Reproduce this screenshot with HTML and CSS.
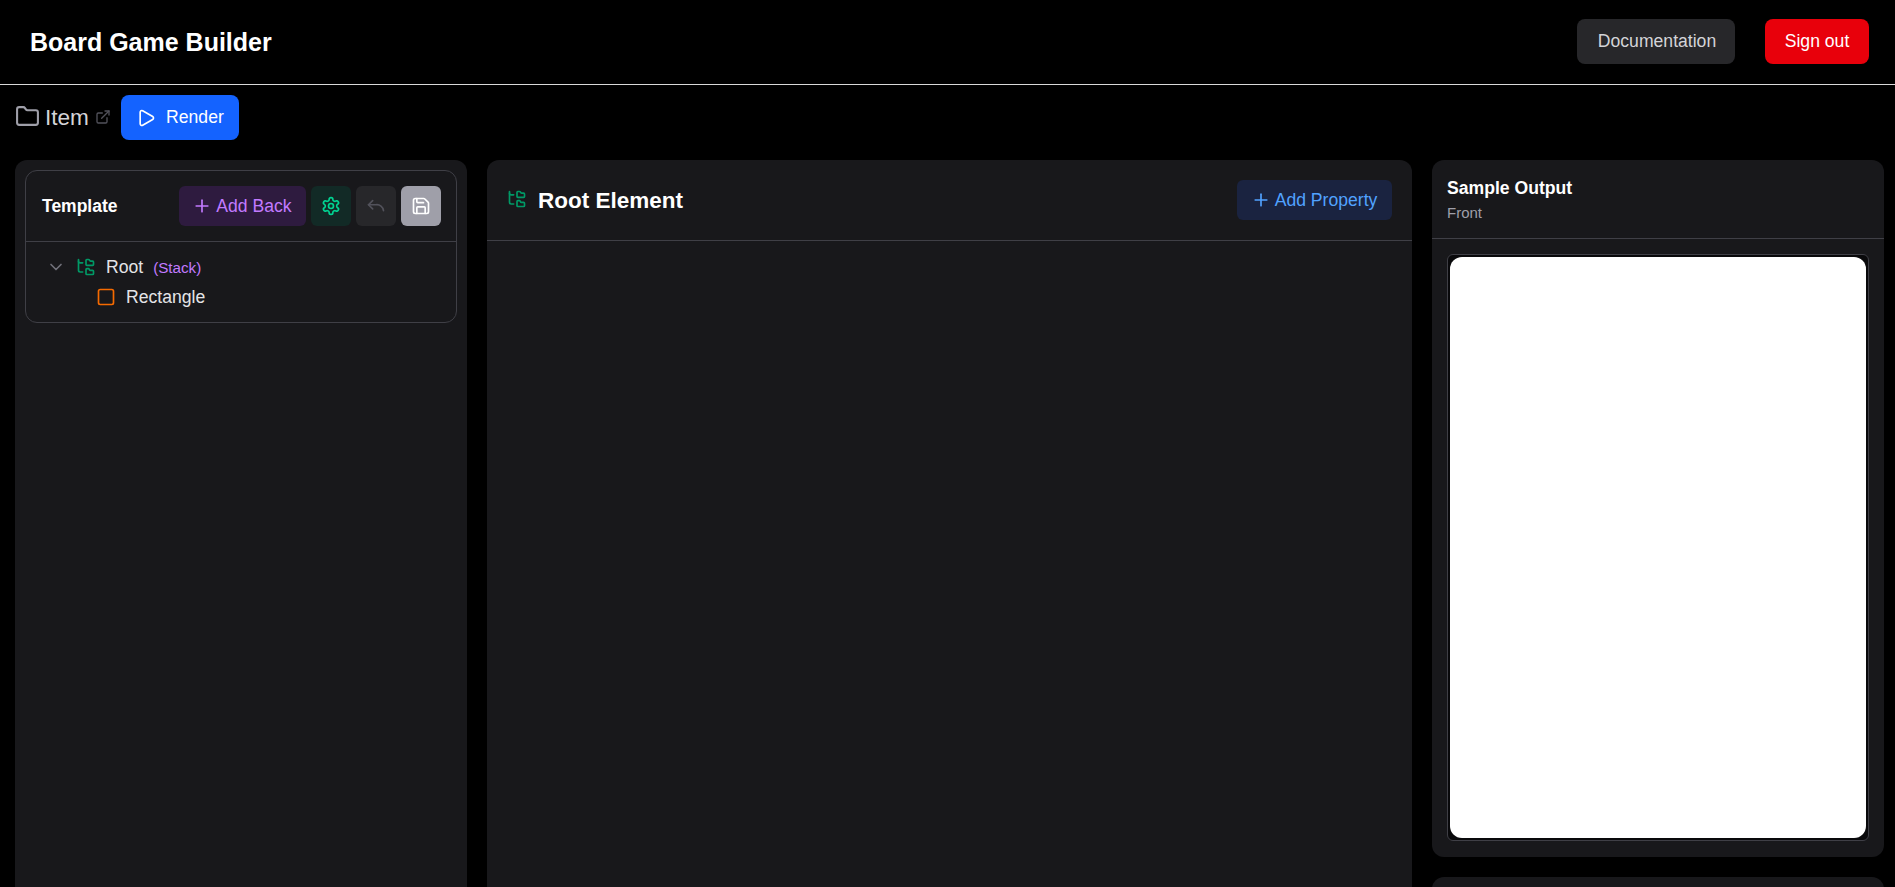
FILE: index.html
```html
<!DOCTYPE html>
<html lang="en">
<head>
<meta charset="utf-8">
<title>Board Game Builder</title>
<link rel="stylesheet" href="styles.css">
</head>
<body>
<svg class="defs" width="0" height="0" aria-hidden="true">
  <symbol id="tree" viewBox="0 0 24 24"><path d="M20 10a1 1 0 0 0 1-1V6a1 1 0 0 0-1-1h-2.5a1 1 0 0 1-.8-.4l-.9-1.2A1 1 0 0 0 15 3h-2a1 1 0 0 0-1 1v5a1 1 0 0 0 1 1Z"/><path d="M20 21a1 1 0 0 0 1-1v-3a1 1 0 0 0-1-1h-2.9a1 1 0 0 1-.88-.55l-.42-.85a1 1 0 0 0-.92-.6H13a1 1 0 0 0-1 1v5a1 1 0 0 0 1 1Z"/><path d="M3 5a2 2 0 0 0 2 2h3"/><path d="M3 3v13a2 2 0 0 0 2 2h3"/></symbol>
  <symbol id="plus" viewBox="0 0 24 24"><path d="M5 12h14"/><path d="M12 5v14"/></symbol>
</svg>
<header class="topbar">
  <h1 class="brand">Board Game Builder</h1>
  <nav class="top-actions">
    <button class="btn btn-doc">Documentation</button>
    <button class="btn btn-signout">Sign out</button>
  </nav>
</header>
<div class="toolbar">
  <svg class="ic ic-folder" viewBox="0 0 24 24"><path d="M20 20a2 2 0 0 0 2-2V8a2 2 0 0 0-2-2h-7.9a2 2 0 0 1-1.69-.9L9.6 3.9A2 2 0 0 0 7.93 3H4a2 2 0 0 0-2 2v13a2 2 0 0 0 2 2Z"/></svg>
  <span class="item-name">Item</span>
  <svg class="ic ic-ext" viewBox="0 0 24 24"><path d="M15 3h6v6"/><path d="M10 14 21 3"/><path d="M18 13v6a2 2 0 0 1-2 2H5a2 2 0 0 1-2-2V8a2 2 0 0 1 2-2h6"/></svg>
  <button class="btn btn-render"><svg class="ic ic-play" viewBox="0 0 24 24"><path d="M5 5a2 2 0 0 1 3.008-1.728l11.997 6.998a2 2 0 0 1 .003 3.458l-12 7A2 2 0 0 1 5 19z"/></svg>Render</button>
</div>
<main class="workspace">
  <section class="panel panel-left">
    <div class="tree-card">
      <div class="tree-head">
        <span class="tree-title">Template</span>
        <div class="tree-actions">
          <button class="btn btn-tint btn-violet"><svg class="ic ic-plus"><use href="#plus"/></svg>Add Back</button>
          <button class="btn-square sq-green"><svg class="ic ic-sq" viewBox="0 0 24 24"><path d="M12.22 2h-.44a2 2 0 0 0-2 2v.18a2 2 0 0 1-1 1.73l-.43.25a2 2 0 0 1-2 0l-.15-.08a2 2 0 0 0-2.73.73l-.22.38a2 2 0 0 0 .73 2.73l.15.1a2 2 0 0 1 1 1.72v.51a2 2 0 0 1-1 1.74l-.15.09a2 2 0 0 0-.73 2.73l.22.38a2 2 0 0 0 2.73.73l.15-.08a2 2 0 0 1 2 0l.43.25a2 2 0 0 1 1 1.73V20a2 2 0 0 0 2 2h.44a2 2 0 0 0 2-2v-.18a2 2 0 0 1 1-1.73l.43-.25a2 2 0 0 1 2 0l.15.08a2 2 0 0 0 2.73-.73l.22-.39a2 2 0 0 0-.73-2.73l-.15-.08a2 2 0 0 1-1-1.74v-.5a2 2 0 0 1 1-1.74l.15-.09a2 2 0 0 0 .73-2.73l-.22-.38a2 2 0 0 0-2.73-.73l-.15.08a2 2 0 0 1-2 0l-.43-.25a2 2 0 0 1-1-1.73V4a2 2 0 0 0-2-2z"/><circle cx="12" cy="12" r="3"/></svg></button>
          <button class="btn-square sq-gray"><svg class="ic ic-sq" viewBox="0 0 24 24"><path d="M8 5.5 3 10.5l5 5"/><path d="M3 10.5h9a8 8 0 0 1 9 7"/></svg></button>
          <button class="btn-square sq-save"><svg class="ic ic-sq" viewBox="0 0 24 24"><path d="M15.2 3a2 2 0 0 1 1.4.6l3.8 3.8a2 2 0 0 1 .6 1.4V19a2 2 0 0 1-2 2H5a2 2 0 0 1-2-2V5a2 2 0 0 1 2-2z"/><path d="M17 21v-7a1 1 0 0 0-1-1H8a1 1 0 0 0-1 1v7"/><path d="M7 3v4a1 1 0 0 0 1 1h7"/></svg></button>
        </div>
      </div>
      <ul class="tree">
        <li class="node node-root">
          <svg class="ic ic-chev" viewBox="0 0 24 24"><path d="m6 9 6 6 6-6"/></svg>
          <svg class="ic ic-tree"><use href="#tree"/></svg>
          <span class="node-label">Root</span>
          <span class="node-type">(Stack)</span>
        </li>
        <li class="node node-child">
          <svg class="ic ic-rect" viewBox="0 0 24 24"><rect x="3" y="3" width="18" height="18" rx="2"/></svg>
          <span class="node-label">Rectangle</span>
        </li>
      </ul>
    </div>
  </section>
  <section class="panel panel-center">
    <div class="center-head">
      <svg class="ic ic-tree ic-tree-head"><use href="#tree"/></svg>
      <h2 class="center-title">Root Element</h2>
      <button class="btn btn-tint btn-blue"><svg class="ic ic-plus"><use href="#plus"/></svg>Add Property</button>
    </div>
  </section>
  <div class="right-col">
    <section class="panel panel-sample">
      <div class="sample-head">
        <div class="sample-title">Sample Output</div>
        <div class="sample-sub">Front</div>
      </div>
      <div class="sample-body">
        <div class="sample-frame"><div class="sample-card"></div></div>
      </div>
    </section>
    <section class="panel panel-next"></section>
  </div>
</main>
</body>
</html>
```
FILE: styles.css
```css
* { box-sizing: border-box; }
html, body { margin: 0; height: 100%; overflow: hidden; }
body { background: #000; color: #fff; font-family: "Liberation Sans", Arial, sans-serif; }
.defs { position: absolute; }
h1, h2 { margin: 0; }
button { font-family: inherit; border: 0; padding: 0; cursor: pointer; }
.ic { fill: none; stroke: currentColor; stroke-width: 2; stroke-linecap: round; stroke-linejoin: round; flex: none; display: block; }

.topbar { height: 85px; display: flex; align-items: center; justify-content: space-between; padding: 0 26px 0 30px; border-bottom: 1px solid #d9d9d9; }
.brand { font-size: 25px; font-weight: 700; line-height: 1; margin-top: 1px; }
.top-actions { display: flex; gap: 30px; margin-bottom: 1px; }
.btn { height: 45px; border-radius: 8px; font-size: 17.6px; display: inline-flex; align-items: center; justify-content: center; }
.btn-doc { width: 158px; background: #27272a; color: #d4d4d8; padding-left: 2px; }
.btn-signout { width: 104px; background: #e8000b; color: #fff; }

.toolbar { height: 75px; display: flex; align-items: flex-start; padding: 10px 0 0 15px; }
.ic-folder { width: 25px; height: 25px; margin-top: 9px; color: #9f9fa9; }
.item-name { font-size: 22.6px; line-height: 28px; margin: 9px 0 0 5px; color: #d4d4d8; }
.ic-ext { width: 16px; height: 16px; margin: 14px 0 0 6px; color: #52525b; }
.btn-render { width: 118px; margin-left: 10px; background: #1463ff; color: #fff; gap: 10px; }
.ic-play { width: 20px; height: 20px; }

.workspace { display: grid; grid-template-columns: 452px 925px 452px; gap: 20px; padding-left: 15px; align-items: start; }
.panel { background: #18181b; border-radius: 12px; }
.panel-left { height: 800px; padding: 10px 10.5px 10px 10px; }
.panel-center { height: 800px; }

.tree-card { border: 1px solid #3f3f46; border-radius: 12px; height: 153px; }
.tree-head { height: 71px; padding: 15px 15px 0 16px; display: flex; align-items: flex-start; justify-content: space-between; border-bottom: 1px solid #3f3f46; }
.tree-title { font-size: 17.5px; font-weight: 700; line-height: 40px; }
.tree-actions { display: flex; gap: 5px; }
.btn-tint { height: 40px; border-radius: 6px; gap: 4px; font-size: 17.6px; }
.btn-violet { width: 127px; background: #2e1b3f; color: #c27aff; }
.btn-blue { width: 155px; margin-left: auto; background: #1a2340; color: #51a2ff; padding-right: 1px; }
.ic-plus { width: 20px; height: 20px; }
.btn-square { width: 40px; height: 40px; border-radius: 6px; display: flex; align-items: center; justify-content: center; }
.ic-sq { width: 20px; height: 20px; }
.sq-green { background: #122a26; color: #00d492; }
.sq-gray { background: #27272a; color: #52525b; }
.sq-save { background: #9f9fa9; color: #fff; }

.tree { list-style: none; margin: 0; padding: 10px 0 0 0; }
.node { display: flex; align-items: center; height: 30px; font-size: 17.6px; color: #e4e4e7; }
.node-root { padding-left: 20px; }
.node-child { padding-left: 70px; }
.ic-chev { width: 20px; height: 20px; color: #71717a; }
.ic-tree { width: 20px; height: 20px; color: #009966; }
.node-root .ic-tree { margin-left: 10px; }
.node-root .node-label { margin-left: 10px; }
.node-type { font-size: 15.2px; color: #c27aff; margin-left: 10px; }
.ic-rect { width: 20px; height: 20px; color: #f56a00; }
.node-child .node-label { margin-left: 10px; }

.center-head { height: 81px; padding: 20px 20px 0 20px; display: flex; align-items: flex-start; border-bottom: 1px solid #3f3f46; }
.ic-tree-head { margin-top: 9px; }
.center-title { font-size: 22.5px; line-height: 40px; font-weight: 700; margin: 1px 0 0 11px; }

.right-col { display: flex; flex-direction: column; gap: 20px; }
.panel-sample { height: 697px; }
.sample-head { height: 79px; padding: 17px 15px 0; border-bottom: 1px solid #3f3f46; }
.sample-title { font-size: 17.6px; font-weight: 700; line-height: 22px; }
.sample-sub { font-size: 15px; line-height: 20px; margin-top: 4px; color: #9f9fa9; }
.sample-body { padding: 15px 15px 0; }
.sample-frame { height: 587px; padding: 2px; border: 1px solid #3f3f46; border-radius: 6px; background: #09090b; }
.sample-card { height: 100%; background: #fff; border-radius: 12px; }
.panel-next { height: 100px; }
```
